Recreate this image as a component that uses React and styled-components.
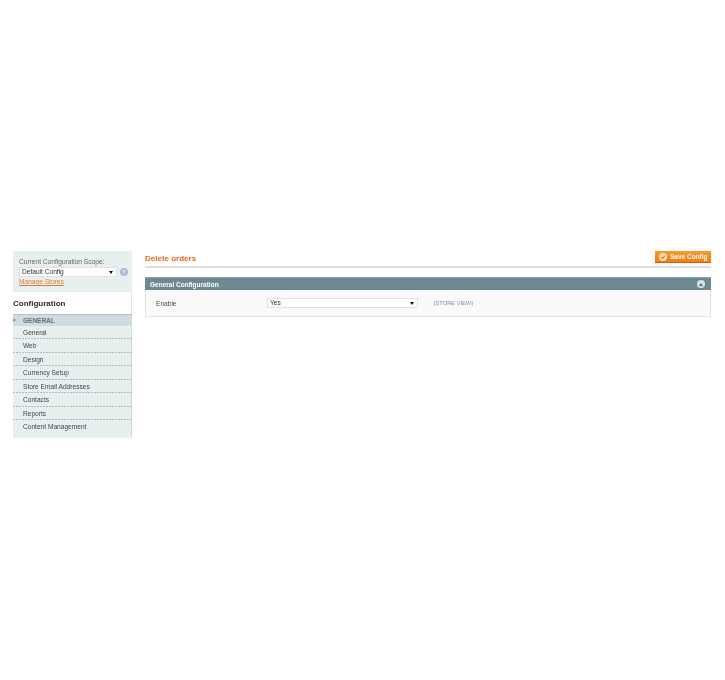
import React from "react";
import styled, { createGlobalStyle } from "styled-components";

const GlobalStyle = createGlobalStyle`
  html, body {
    margin: 0;
    padding: 0;
    background: #fff;
    font-family: "Liberation Sans", Arial, sans-serif;
  }
`;

const Page = styled.div`
  display: flex;
  align-items: flex-start;
  gap: 13px;
  padding: 251px 14px 243px 13px;
  filter: blur(0.4px);
`;

const Sidebar = styled.aside`
  width: 119px;
  flex: none;
  background: #e7efef;
  box-shadow: inset -1px 0 0 #d3dcdc;
`;

const Scope = styled.div`
  height: 41px;
  box-sizing: border-box;
  padding: 7px 0 0 6px;
  background: #e7efef;
  font-size: 6.6px;
  line-height: 8px;
  color: #5f6a6a;
`;

const ScopeRow = styled.div`
  display: flex;
  align-items: center;
  gap: 3px;
  margin: 1px 0 1px;
`;

const Select = styled.div`
  display: flex;
  align-items: center;
  justify-content: space-between;
  box-sizing: border-box;
  width: ${(p) => p.$width}px;
  height: 10px;
  padding: 0 3px 0 2px;
  background: #fff;
  border: 1px solid #dde2e2;
  font-size: 6.6px;
  line-height: 8px;
  color: #2f2f2f;
`;

const Arrow = styled.span`
  width: 0;
  height: 0;
  border-left: 2px solid transparent;
  border-right: 2px solid transparent;
  border-top: 3px solid #111;
`;

const HelpIcon = styled.span`
  width: 8px;
  height: 8px;
  border-radius: 50%;
  background: #a9bed2;
  color: #e6eef5;
  font-size: 6px;
  font-weight: bold;
  line-height: 8px;
  text-align: center;
`;

const StoresLink = styled.a`
  color: #ea7a33;
  text-decoration: underline;
  font-size: 6.6px;
  line-height: 8px;
`;

const SideTitle = styled.h3`
  margin: 0;
  height: 22px;
  background: #fff;
  border-right: 1px solid #e3e3e3;
  font-size: 8px;
  line-height: 23px;
  font-weight: bold;
  color: #2b2b2b;
`;

const SectionHead = styled.div`
  position: relative;
  box-sizing: border-box;
  height: 12px;
  padding-left: 10px;
  background: #cfdcdf;
  border-top: 1px solid #b3c2c6;
  font-size: 6.5px;
  line-height: 11px;
  font-weight: bold;
  color: #5d7680;

  &::before {
    content: "";
    position: absolute;
    left: 0;
    top: 3px;
    border-top: 2px solid transparent;
    border-bottom: 2px solid transparent;
    border-left: 3px solid #8aa0a8;
  }
`;

const Menu = styled.ul`
  margin: 0;
  padding: 0 0 4px;
  list-style: none;
`;

const MenuItem = styled.li`
  height: 13.44px;
  box-sizing: border-box;
  padding-left: 10px;
  background: repeating-linear-gradient(90deg, #b4bdbd 0 2px, transparent 2px 3px) left bottom / 100% 1px no-repeat;
  font-size: 6.6px;
  line-height: 13px;
  color: #44444e;

  &:last-child {
    background: none;
  }
`;

const Main = styled.main`
  flex: 1;
  min-width: 0;
`;

const TitleBar = styled.div`
  display: flex;
  align-items: center;
  justify-content: space-between;
  height: 15px;
  border-bottom: 2px solid #dfdfdf;
  margin-bottom: 9px;
`;

const PageTitle = styled.h3`
  margin: 0;
  font-size: 8px;
  line-height: 14px;
  font-weight: bold;
  color: #f0651a;
`;

const SaveButton = styled.button`
  display: flex;
  align-items: center;
  gap: 3px;
  width: 56px;
  height: 12px;
  padding: 0 0 0 4px;
  margin-top: -3px;
  border: 0;
  border-bottom: 1px solid #d85f00;
  background: linear-gradient(#fb9a2c, #f77c0e);
  color: #fff;
  font-family: inherit;
  font-size: 6.5px;
  font-weight: bold;
  white-space: nowrap;
`;

const Panel = styled.section`
  background: #fafafa;
  border: 1px solid #e2e2e2;
  border-top: 0;
`;

const PanelHead = styled.div`
  display: flex;
  align-items: center;
  justify-content: space-between;
  height: 13px;
  margin: 0 -1px;
  padding: 0 6px 0 5px;
  background: #6f8992;
  border-top: 1px solid #8fa3aa;
  box-sizing: border-box;
  font-size: 6.5px;
  font-weight: bold;
  color: #fff;
`;

const Collapse = styled.span`
  display: flex;
  align-items: center;
  justify-content: center;
  width: 8px;
  height: 8px;
  border-radius: 50%;
  background: #d8e2e4;

  &::after {
    content: "";
    border-left: 2px solid transparent;
    border-right: 2px solid transparent;
    border-bottom: 3px solid #55707a;
  }
`;

const FormRow = styled.div`
  display: flex;
  align-items: center;
  height: 26px;
  padding-left: 10px;
  font-size: 6.6px;
  color: #4d4d4d;
`;

const Label = styled.label`
  width: 111px;
`;

const ScopeLabel = styled.span`
  margin-left: 16px;
  font-size: 5.7px;
  color: #7e8f9c;
`;

const Tick = () => (
  <svg width="8" height="8" viewBox="0 0 8 8">
    <circle cx="4" cy="4" r="4" fill="#fde4c8" />
    <path d="M2.2 4.1 L3.6 5.5 L5.9 2.7" fill="none" stroke="#f77c0e" strokeWidth="1.3" />
  </svg>
);

const items = [
  "General",
  "Web",
  "Design",
  "Currency Setup",
  "Store Email Addresses",
  "Contacts",
  "Reports",
  "Content Management",
];

export default function App() {
  return (
    <>
      <GlobalStyle />
      <Page>
        <Sidebar>
          <Scope>
            Current Configuration Scope:
            <ScopeRow>
              <Select $width={98}>
                Default Config
                <Arrow />
              </Select>
              <HelpIcon>?</HelpIcon>
            </ScopeRow>
            <StoresLink>Manage Stores</StoresLink>
          </Scope>
          <SideTitle>Configuration</SideTitle>
          <SectionHead>GENERAL</SectionHead>
          <Menu>
            {items.map((item) => (
              <MenuItem key={item}>{item}</MenuItem>
            ))}
          </Menu>
        </Sidebar>
        <Main>
          <TitleBar>
            <PageTitle>Delete orders</PageTitle>
            <SaveButton>
              <Tick />
              Save Config
            </SaveButton>
          </TitleBar>
          <Panel>
            <PanelHead>
              General Configuration
              <Collapse />
            </PanelHead>
            <FormRow>
              <Label>Enable</Label>
              <Select $width={151}>
                Yes
                <Arrow />
              </Select>
              <ScopeLabel>[STORE VIEW]</ScopeLabel>
            </FormRow>
          </Panel>
        </Main>
      </Page>
    </>
  );
}
